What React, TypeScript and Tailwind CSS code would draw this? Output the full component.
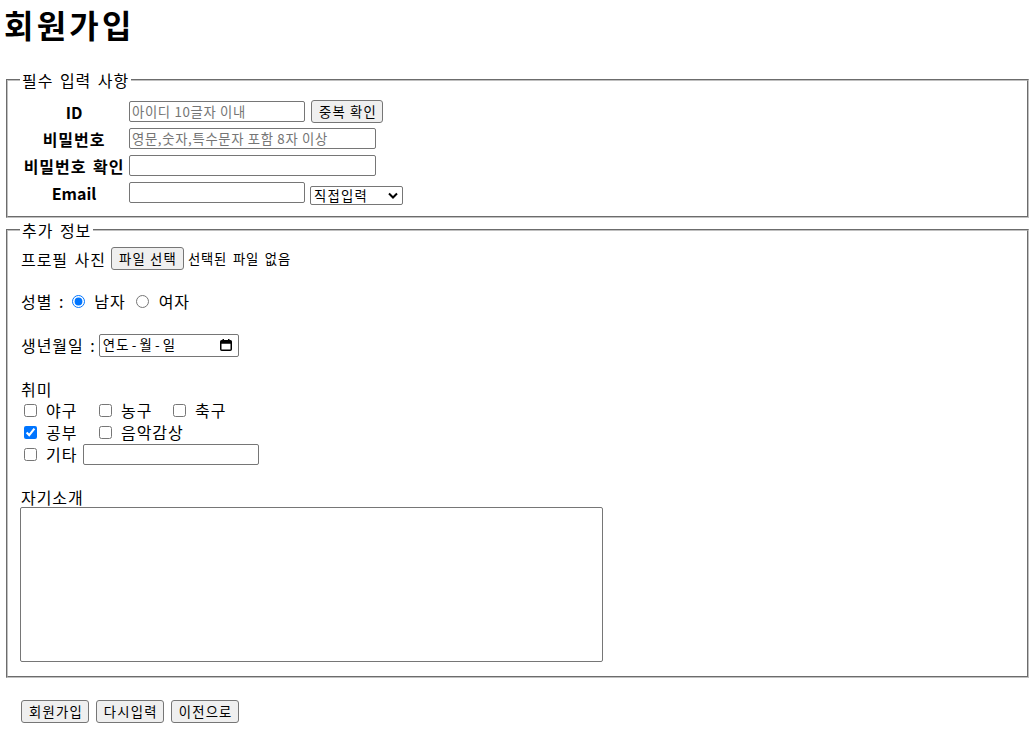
import React from 'react'

const inputBox =
  'h-[21px] rounded-[2px] border border-[#767676] bg-white px-[2px] text-[13.33px] leading-[17px] tracking-[0.05em] outline-none placeholder:text-[#757575]'
const btn =
  'flex h-[23px] items-center rounded-[3px] border border-[#767676] bg-[#efefef] pl-[7px] pr-[5px] text-[13.33px] leading-[17px] tracking-[0.09em] text-black'

function CalendarIcon() {
  return (
    <svg width="12" height="12" viewBox="0 0 12 12">
      <rect x="0.75" y="1.75" width="10.5" height="9.5" rx="1" fill="none" stroke="#000" strokeWidth="1.5" />
      <rect x="0.75" y="1.75" width="10.5" height="3" fill="#000" />
      <rect x="2.5" y="0" width="1.5" height="2.5" fill="#000" />
      <rect x="8" y="0" width="1.5" height="2.5" fill="#000" />
    </svg>
  )
}

function Check({ checked = false }: { checked?: boolean }) {
  return <input type="checkbox" defaultChecked={checked} className="m-0 size-[13px] accent-[#0075ff]" />
}

export default function App() {
  return (
    <div className="min-h-[742px] bg-white pl-[4px] pr-[3px] text-[16px] tracking-[0.06em] text-black [word-spacing:2px] font-['Noto_Sans_CJK_KR',sans-serif]">
      <h1 className="mt-[3px] text-[32px] font-bold leading-[42px] tracking-[0.1em]">회원가입</h1>

      {/* 필수 입력 */}
      <fieldset className="mx-[2px] mt-[24px] border-2 border-[#c0c0c0] px-[12px] pt-[7px] pb-[10px] [border-style:groove]">
        <legend className="px-[2px] text-[16px] leading-[22px]">필수 입력 사항</legend>
        <div className="flex flex-col">
          <div className="flex h-[27px] items-center">
            <span className="ml-[2px] w-[104px] text-center font-bold tracking-normal">ID</span>
            <input className={`${inputBox} ml-[3px] w-[176px]`} placeholder="아이디 10글자 이내" />
            <button className={`${btn} ml-[6px] pl-[6px] pr-[4px]`}>중복 확인</button>
          </div>
          <div className="flex h-[27px] items-center">
            <span className="ml-[2px] w-[104px] text-center font-bold">비밀번호</span>
            <input className={`${inputBox} ml-[3px] w-[247px]`} placeholder="영문,숫자,특수문자 포함 8자 이상" />
          </div>
          <div className="flex h-[27px] items-center">
            <span className="ml-[2px] w-[104px] text-center font-bold">비밀번호 확인</span>
            <input className={`${inputBox} ml-[3px] w-[247px]`} />
          </div>
          <div className="flex h-[27px] items-center">
            <span className="ml-[2px] w-[104px] text-center font-bold tracking-normal">Email</span>
            <input className={`${inputBox} ml-[3px] w-[176px]`} />
            <div className="mb-[1px] ml-[5px] flex h-[19px] w-[93px] items-center justify-between self-end rounded-[2px] border border-[#767676] bg-white pl-[3px] pr-[4px] text-[13.33px] leading-[17px] tracking-[0.09em]">
              <span>직접입력</span>
              <svg width="10" height="7" viewBox="0 0 10 7">
                <path d="M1 1.5l4 4 4-4" fill="none" stroke="#000" strokeWidth="2" />
              </svg>
            </div>
          </div>
        </div>
      </fieldset>

      {/* 추가 정보 */}
      <fieldset className="mx-[2px] mt-[1px] border-2 border-[#c0c0c0] px-[12px] pt-[5px] pb-[14px] [border-style:groove]">
        <legend className="px-[2px] text-[16px] leading-[22px]">추가 정보</legend>

        <div className="flex h-[25px] items-center">
          <span className="ml-[1px]">프로필 사진</span>
          <button className={`${btn} ml-[5px] pr-[6px]`}>파일 선택</button>
          <span className="ml-[4px] text-[13.33px] tracking-[0.06em]">선택된 파일 없음</span>
        </div>

        <div className="mt-[19px] flex h-[22px] items-center">
          <span className="ml-[1px]">성별 :</span>
          <input type="radio" name="gender" defaultChecked className="m-0 ml-[8px] size-[13px] accent-[#0075ff]" />
          <span className="ml-[9px]">남자</span>
          <input type="radio" name="gender" className="m-0 ml-[10px] size-[13px]" />
          <span className="ml-[10px]">여자</span>
        </div>

        <div className="mt-[21px] flex h-[24px] items-center">
          <span className="ml-[1px]">생년월일 :</span>
          <div className="ml-[3px] flex h-[23px] w-[140px] items-center justify-between rounded-[2px] border border-[#767676] pl-[3px] pr-[6px] text-[13.33px] tracking-[0.09em]">
            <span>
              연도<span className="mx-[2px]">-</span>월<span className="mx-[2px]">-</span>일
            </span>
            <CalendarIcon />
          </div>
        </div>

        <div className="mt-[22px] ml-[1px] h-[20px] leading-[20px]">취미</div>
        <div className="grid grid-cols-[75px_74px_auto]">
          <label className="flex h-[22px] items-center pl-[4px]">
            <Check />
            <span className="ml-[9px]">야구</span>
          </label>
          <label className="flex h-[22px] items-center pl-[4px]">
            <Check />
            <span className="ml-[9px]">농구</span>
          </label>
          <label className="flex h-[22px] items-center pl-[4px]">
            <Check />
            <span className="ml-[9px]">축구</span>
          </label>
          <label className="flex h-[22px] items-center pl-[4px]">
            <Check checked />
            <span className="ml-[9px]">공부</span>
          </label>
          <label className="col-span-2 flex h-[22px] items-center pl-[4px]">
            <Check />
            <span className="ml-[9px]">음악감상</span>
          </label>
          <div className="col-span-3 flex h-[22px] items-center pl-[4px]">
            <Check />
            <span className="ml-[9px]">기타</span>
            <input className={`${inputBox} ml-[6px] h-[20px] w-[176px]`} />
          </div>
        </div>

        <div className="mt-[22px] ml-[1px] h-[20px] leading-[20px]">자기소개</div>
        <textarea className="block h-[155px] w-[583px] resize-none rounded-[2px] border border-[#767676] bg-white outline-none" />
      </fieldset>

      <div className="mt-[22px] ml-[17px] flex gap-[7px]">
        <button className={btn}>회원가입</button>
        <button className={btn}>다시입력</button>
        <button className={btn}>이전으로</button>
      </div>
    </div>
  )
}
